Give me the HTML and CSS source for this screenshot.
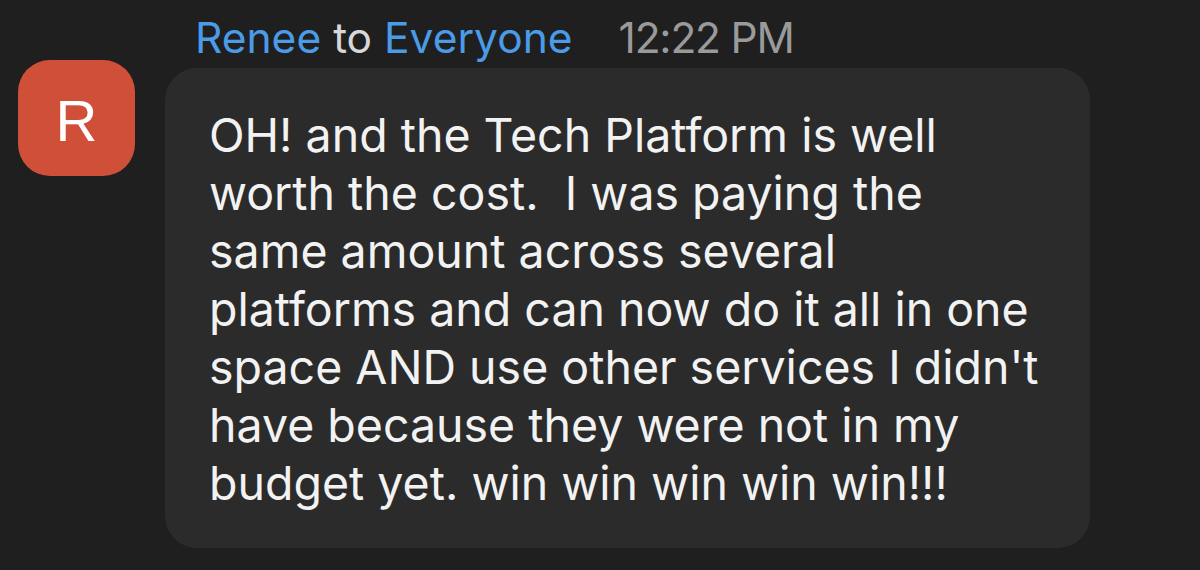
FILE: index.html
```html
<!DOCTYPE html>
<html>
<head>
<meta charset="utf-8">
<link rel="stylesheet" href="styles.css">
</head>
<body>
<div class="chat">
  <div class="header">
    <span class="name">Renee</span> <span class="to">to</span> <span class="name">Everyone</span><span class="time">12:22 PM</span>
  </div>
  <div class="row">
    <div class="avatar">R</div>
    <div class="bubble">OH! and the Tech Platform is well<br>worth the cost.&nbsp; I was paying the<br>same amount across several<br>platforms and can now do it all in one<br>space AND use other services I didn't<br>have because they were not in my<br>budget yet. win win win win win!!!</div>
  </div>
</div>
</body>
</html>
```
FILE: styles.css
```css
html, body {
  margin: 0;
  padding: 0;
  background: #1f1f1f;
  width: 1200px;
  height: 570px;
  overflow: hidden;
}
.chat {
  font-family: "Inter", "Liberation Sans", Arial, sans-serif;
  padding: 13px 0 0 18px;
}
.header {
  margin-left: 177px;
  font-size: 42.5px;
  line-height: 50px;
  color: #d8d8d8;
}
.name { color: #4a9be8; }
.to { color: #d8d8d8; }
.time {
  color: #9a9a9a;
  margin-left: 46px;
  letter-spacing: -1.2px;
}
.row {
  display: flex;
  align-items: flex-start;
  margin-top: -3px;
}
.avatar {
  width: 117px;
  height: 116px;
  border-radius: 32px;
  background: #cf4f38;
  color: #ffffff;
  font-family: "Liberation Sans", Arial, sans-serif;
  font-size: 58px;
  line-height: 1;
  padding-top: 6px;
  box-sizing: border-box;
  display: flex;
  align-items: center;
  justify-content: center;
  flex: none;
}
.bubble {
  margin-left: 30px;
  margin-top: 8px;
  width: 925px;
  box-sizing: border-box;
  height: 480px;
  background: #2b2b2b;
  border-radius: 32px;
  padding: 38px 0 0 44px;
  color: #f2f2f2;
  font-size: 46.5px;
  line-height: 58px;
}
```
